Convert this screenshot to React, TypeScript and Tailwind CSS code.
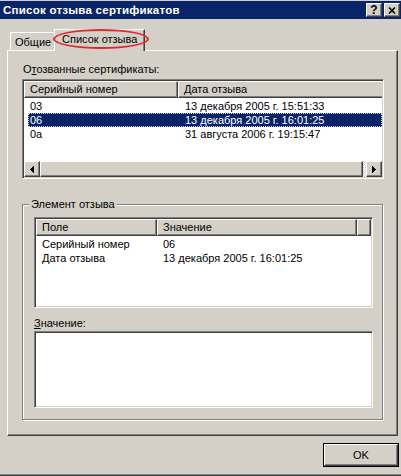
import React from 'react';

const raised =
  'bg-[#d4d0c8] border border-t-white border-l-white border-r-[#404040] border-b-[#404040] shadow-[inset_-1px_-1px_0_#808080]';
const sunken =
  'border border-t-[#808080] border-l-[#808080] border-r-white border-b-white shadow-[inset_1px_1px_0_#404040,inset_-1px_-1px_0_#d4d0c8] p-px bg-white';

function ArrowLeft() {
  return (
    <svg width="4" height="7" viewBox="0 0 4 7" shapeRendering="crispEdges">
      <polygon points="4,0 4,7 0,3.5" fill="#000" />
    </svg>
  );
}

function ArrowRight() {
  return (
    <svg width="4" height="7" viewBox="0 0 4 7" shapeRendering="crispEdges">
      <polygon points="0,0 0,7 4,3.5" fill="#000" />
    </svg>
  );
}

const revoked = [
  { serial: '03', date: '13 декабря 2005 г. 15:51:33' },
  { serial: '06', date: '13 декабря 2005 г. 16:01:25', selected: true },
  { serial: '0a', date: '31 августа 2006 г. 19:15:47' },
];

const details = [
  { field: 'Серийный номер', value: '06' },
  { field: 'Дата отзыва', value: '13 декабря 2005 г. 16:01:25' },
];

export default function App() {
  return (
    <div className="w-[401px] h-[476px] overflow-hidden bg-[#d4d0c8] flex flex-col font-['Liberation_Sans',Arial,sans-serif] text-[11px] leading-[13px] text-black select-none">
      {/* Title bar */}
      <div className="mt-px h-[18px] bg-[#0a246a] flex items-center justify-between pl-[3px] pr-[1px]">
        <span className="text-white font-bold text-[11.5px] tracking-[0.25px]">Список отзыва сертификатов</span>
        <div className="flex gap-[2px]">
          <div className={`${raised} w-[16px] h-[14px] flex items-center justify-center font-bold text-[12px] leading-none`}>?</div>
          <div className={`${raised} w-[16px] h-[14px] flex items-center justify-center`}>
            <svg width="8" height="7" viewBox="0 0 8 7">
              <path d="M1 0.5 L7 6.5 M7 0.5 L1 6.5" stroke="#000" strokeWidth="1.6" />
            </svg>
          </div>
        </div>
      </div>

      {/* Tabs */}
      <div className="relative h-[31px] flex items-end pl-[10px]">
        <div className="h-[18px] w-[44px] border-t border-l border-white pl-[4px] pt-[3px]">Общие</div>
        <div className="relative z-10 -mb-px h-[22px] w-[91px] bg-[#d4d0c8] border-t border-l border-white border-r border-r-[#404040] shadow-[inset_-1px_0_0_#808080] pl-[7px] pt-[3px] rounded-tl-[1px]">
          Список отзыва
        </div>
        <div className="pointer-events-none absolute z-20 left-[53px] top-[10px] w-[96px] h-[20px] rounded-[50%] border-2 border-[#e3262e]" />
      </div>

      {/* Tab page */}
      <div className="ml-[7px] w-[391px] h-[386px] border border-t-white border-l-white border-r-[#404040] border-b-[#404040] shadow-[inset_-1px_-1px_0_#808080] pl-[14px] pt-[12px] pb-[15px] flex flex-col">
        <div className="pl-px">
          О<span className="underline underline-offset-[1px]">т</span>озванные сертификаты:
        </div>

        {/* Revoked list */}
        <div className={`${sunken} mt-[3px] w-[362px] h-[100px] flex flex-col`}>
          <div className="h-[17px] flex shrink-0">
            <div className={`${raised} w-[154px] pl-[5px] pt-[1px]`}>Серийный номер</div>
            <div className="flex-1 bg-[#d4d0c8] border border-r-0 border-t-white border-l-white border-b-[#404040] shadow-[inset_0_-1px_0_#808080] pl-[5px] pt-[1px]">
              Дата отзыва
            </div>
          </div>
          <div className="flex-1 pl-[4px] pt-px">
            {revoked.map((r) => (
              <div
                key={r.serial}
                className={`h-[14px] flex items-center ${
                  r.selected
                    ? 'bg-[#0a246a] text-white outline outline-1 outline-dotted outline-[#d4d0c8] -outline-offset-1'
                    : ''
                }`}
              >
                <span className="w-[155px] pl-[2px]">{r.serial}</span>
                <span className="pl-[2px]">{r.date}</span>
              </div>
            ))}
          </div>
          <div className="h-[16px] flex shrink-0">
            <div className={`${raised} w-[16px] flex items-center justify-center`}>
              <ArrowLeft />
            </div>
            <div className={`${raised} flex-1`} />
            <div className="w-[3px] bg-[repeating-conic-gradient(#ffffff_0_25%,#d4d0c8_0_50%)] bg-[length:2px_2px]" />
            <div className={`${raised} w-[16px] flex items-center justify-center`}>
              <ArrowRight />
            </div>
          </div>
        </div>

        {/* Group box */}
        <div className="relative mt-[25px] w-[361px] h-[216px] border border-[#808080] shadow-[1px_1px_0_#fff,inset_1px_1px_0_#fff] pl-[11px] pt-[12px] flex flex-col">
          <span className="absolute left-[6px] -top-[7px] px-[2px] bg-[#d4d0c8]">Элемент отзыва</span>

          <div className={`${sunken} w-[339px] h-[91px] flex flex-col`}>
            <div className="h-[17px] flex shrink-0">
              <div className={`${raised} w-[121px] pl-[5px] pt-[1px]`}>Поле</div>
              <div className={`${raised} w-[200px] pl-[5px] pt-[1px]`}>Значение</div>
              <div className={`${raised} flex-1`} />
            </div>
            <div className="flex-1 pl-[6px] pt-px">
              {details.map((d) => (
                <div key={d.field} className="h-[14px] flex items-center">
                  <span className="w-[121px]">{d.field}</span>
                  <span>{d.value}</span>
                </div>
              ))}
            </div>
          </div>

          <div className="mt-[9px]">
            <span className="underline underline-offset-[1px]">З</span>начение:
          </div>
          <div className={`${sunken} mt-px w-[339px] h-[77px]`} />
        </div>
      </div>

      {/* Buttons */}
      <div className="flex justify-end pr-[2px] mt-[7px]">
        <div className="w-[76px] h-[24px] border border-black">
          <div className={`${raised} w-full h-full flex items-center justify-center`}>OK</div>
        </div>
      </div>

      <div className="mt-auto h-[2px] border-t border-t-[#808080] border-b border-b-[#404040]" />
    </div>
  );
}
